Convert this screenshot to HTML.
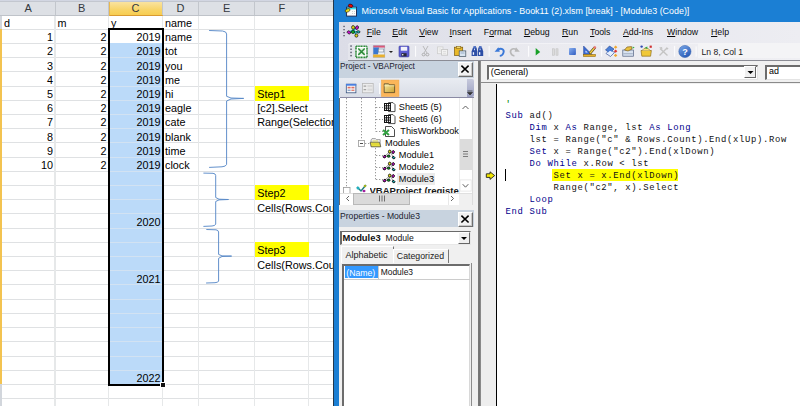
<!DOCTYPE html>
<html><head><meta charset="utf-8"><style>
*{margin:0;padding:0;box-sizing:border-box}
html,body{width:800px;height:406px;overflow:hidden;background:#fff;position:relative;font-family:"Liberation Sans",sans-serif}
.a{position:absolute}
.xl{position:absolute;left:0;top:0;width:333px;height:406px;overflow:hidden;background:#fff}
.c{position:absolute;font-size:10.5px;line-height:14px;color:#000;white-space:nowrap}
.r{text-align:right}
.hl{position:absolute;height:1px;background:#dfe1e3}
.vl{position:absolute;width:1.4px;background:#e6e8e9}
.ch{position:absolute;top:2.4px;height:13px;font-size:11px;line-height:13px;text-align:center;color:#34383e}
.mono{font-family:"Liberation Mono",monospace}
.kw{color:#00008b}
</style></head><body>

<div class="xl">
<div class="a" style="left:0;top:0;width:333px;height:1px;background:#d2d6e2"></div>
<div class="a" style="left:0;top:1px;width:333px;height:1px;background:#c3c7cf"></div>
<div class="a" style="left:0;top:2px;width:333px;height:13px;background:#dde0e5"></div>
<div class="a" style="left:0;top:15px;width:333px;height:1px;background:#bfc3c9"></div>
<div class="a" style="left:108.5px;top:2px;width:54px;height:14px;background:linear-gradient(#fae3a0,#f8d468 60%,#f7cd50);border-left:1px solid #e8b850;border-right:1px solid #e8b850;border-bottom:1px solid #d99a30"></div>
<div class="ch" style="left:1.5px;width:53.5px">A</div>
<div class="a" style="left:54.5px;top:2px;width:1px;height:13px;background:#c2c6cc"></div>
<div class="ch" style="left:55.0px;width:53.5px">B</div>
<div class="a" style="left:108.0px;top:2px;width:1px;height:13px;background:#c2c6cc"></div>
<div class="ch" style="left:108.5px;width:54.0px">C</div>
<div class="a" style="left:162.0px;top:2px;width:1px;height:13px;background:#c2c6cc"></div>
<div class="ch" style="left:162.5px;width:36.19999999999999px">D</div>
<div class="a" style="left:198.2px;top:2px;width:1px;height:13px;background:#c2c6cc"></div>
<div class="ch" style="left:198.7px;width:56.10000000000002px">E</div>
<div class="a" style="left:254.3px;top:2px;width:1px;height:13px;background:#c2c6cc"></div>
<div class="ch" style="left:254.8px;width:53.89999999999998px">F</div>
<div class="a" style="left:308.2px;top:2px;width:1px;height:13px;background:#c2c6cc"></div>
<div class="ch" style="left:308.7px;width:56.80000000000001px">G</div>
<div class="a" style="left:0;top:16px;width:1.8px;height:390px;background:#d2d6dc"></div>
<div class="a" style="left:0;top:29.2px;width:1.8px;height:355.25px;background:#f3c350"></div>
<div class="hl" style="left:2px;top:28.70px;width:331px"></div>
<div class="hl" style="left:2px;top:42.91px;width:331px"></div>
<div class="hl" style="left:2px;top:57.12px;width:331px"></div>
<div class="hl" style="left:2px;top:71.33px;width:331px"></div>
<div class="hl" style="left:2px;top:85.54px;width:331px"></div>
<div class="hl" style="left:2px;top:99.75px;width:331px"></div>
<div class="hl" style="left:2px;top:113.96px;width:331px"></div>
<div class="hl" style="left:2px;top:128.17px;width:331px"></div>
<div class="hl" style="left:2px;top:142.38px;width:331px"></div>
<div class="hl" style="left:2px;top:156.59px;width:331px"></div>
<div class="hl" style="left:2px;top:170.80px;width:331px"></div>
<div class="hl" style="left:2px;top:185.01px;width:331px"></div>
<div class="hl" style="left:2px;top:199.22px;width:331px"></div>
<div class="hl" style="left:2px;top:213.43px;width:331px"></div>
<div class="hl" style="left:2px;top:227.64px;width:331px"></div>
<div class="hl" style="left:2px;top:241.85px;width:331px"></div>
<div class="hl" style="left:2px;top:256.06px;width:331px"></div>
<div class="hl" style="left:2px;top:270.27px;width:331px"></div>
<div class="hl" style="left:2px;top:284.48px;width:331px"></div>
<div class="hl" style="left:2px;top:298.69px;width:331px"></div>
<div class="hl" style="left:2px;top:312.90px;width:331px"></div>
<div class="hl" style="left:2px;top:327.11px;width:331px"></div>
<div class="hl" style="left:2px;top:341.32px;width:331px"></div>
<div class="hl" style="left:2px;top:355.53px;width:331px"></div>
<div class="hl" style="left:2px;top:369.74px;width:331px"></div>
<div class="hl" style="left:2px;top:383.95px;width:331px"></div>
<div class="hl" style="left:2px;top:398.16px;width:331px"></div>
<div class="hl" style="left:2px;top:412.37px;width:331px"></div>
<div class="a" style="left:108.5px;top:43.41px;width:54.0px;height:341.04px;background:#bbdaf9"></div>
<div class="a" style="left:108.5px;top:57.12px;width:54px;height:1px;background:#d2e2f2"></div>
<div class="a" style="left:108.5px;top:71.33px;width:54px;height:1px;background:#d2e2f2"></div>
<div class="a" style="left:108.5px;top:85.54px;width:54px;height:1px;background:#d2e2f2"></div>
<div class="a" style="left:108.5px;top:99.75px;width:54px;height:1px;background:#d2e2f2"></div>
<div class="a" style="left:108.5px;top:113.96px;width:54px;height:1px;background:#d2e2f2"></div>
<div class="a" style="left:108.5px;top:128.17px;width:54px;height:1px;background:#d2e2f2"></div>
<div class="a" style="left:108.5px;top:142.38px;width:54px;height:1px;background:#d2e2f2"></div>
<div class="a" style="left:108.5px;top:156.59px;width:54px;height:1px;background:#d2e2f2"></div>
<div class="a" style="left:108.5px;top:170.80px;width:54px;height:1px;background:#d2e2f2"></div>
<div class="a" style="left:108.5px;top:185.01px;width:54px;height:1px;background:#d2e2f2"></div>
<div class="a" style="left:108.5px;top:199.22px;width:54px;height:1px;background:#d2e2f2"></div>
<div class="a" style="left:108.5px;top:213.43px;width:54px;height:1px;background:#d2e2f2"></div>
<div class="a" style="left:108.5px;top:227.64px;width:54px;height:1px;background:#d2e2f2"></div>
<div class="a" style="left:108.5px;top:241.85px;width:54px;height:1px;background:#d2e2f2"></div>
<div class="a" style="left:108.5px;top:256.06px;width:54px;height:1px;background:#d2e2f2"></div>
<div class="a" style="left:108.5px;top:270.27px;width:54px;height:1px;background:#d2e2f2"></div>
<div class="a" style="left:108.5px;top:284.48px;width:54px;height:1px;background:#d2e2f2"></div>
<div class="a" style="left:108.5px;top:298.69px;width:54px;height:1px;background:#d2e2f2"></div>
<div class="a" style="left:108.5px;top:312.90px;width:54px;height:1px;background:#d2e2f2"></div>
<div class="a" style="left:108.5px;top:327.11px;width:54px;height:1px;background:#d2e2f2"></div>
<div class="a" style="left:108.5px;top:341.32px;width:54px;height:1px;background:#d2e2f2"></div>
<div class="a" style="left:108.5px;top:355.53px;width:54px;height:1px;background:#d2e2f2"></div>
<div class="a" style="left:108.5px;top:369.74px;width:54px;height:1px;background:#d2e2f2"></div>
<div class="vl" style="left:54.3px;top:16px;height:390px"></div>
<div class="vl" style="left:107.8px;top:16px;height:390px"></div>
<div class="vl" style="left:161.8px;top:16px;height:390px"></div>
<div class="vl" style="left:198.0px;top:16px;height:390px"></div>
<div class="vl" style="left:254.10000000000002px;top:16px;height:390px"></div>
<div class="vl" style="left:308.0px;top:16.00px;height:84.25px"></div>
<div class="vl" style="left:308.0px;top:114.46px;height:0.00px"></div>
<div class="vl" style="left:308.0px;top:128.67px;height:71.05px"></div>
<div class="vl" style="left:308.0px;top:213.93px;height:42.63px"></div>
<div class="vl" style="left:308.0px;top:270.77px;height:135.23px"></div>
<div class="a" style="left:254.8px;top:85.84px;width:54.199999999999974px;height:14.91px;background:#ffff00"></div>
<div class="a" style="left:254.8px;top:185.31px;width:54.199999999999974px;height:14.91px;background:#ffff00"></div>
<div class="a" style="left:254.8px;top:242.15px;width:54.199999999999974px;height:14.91px;background:#ffff00"></div>
<div class="c" style="left:4.0px;top:15.96px;font-size:10.8px">d</div>
<div class="c" style="left:57.5px;top:15.96px;font-size:10.8px">m</div>
<div class="c" style="left:111.0px;top:15.96px;font-size:10.8px">y</div>
<div class="c" style="left:165.0px;top:15.96px;font-size:10.8px">name</div>
<div class="c r" style="left:1.5px;width:51.5px;top:30.16px;font-size:10.8px">1</div>
<div class="c r" style="left:55.0px;width:51.5px;top:30.16px;font-size:10.8px">2</div>
<div class="c r" style="left:108.5px;width:52.0px;top:30.16px;font-size:10.8px">2019</div>
<div class="c" style="left:165.0px;top:30.16px;font-size:10.8px">name</div>
<div class="c r" style="left:1.5px;width:51.5px;top:44.37px;font-size:10.8px">2</div>
<div class="c r" style="left:55.0px;width:51.5px;top:44.37px;font-size:10.8px">2</div>
<div class="c r" style="left:108.5px;width:52.0px;top:44.37px;font-size:10.8px">2019</div>
<div class="c" style="left:165.0px;top:44.37px;font-size:10.8px">tot</div>
<div class="c r" style="left:1.5px;width:51.5px;top:58.58px;font-size:10.8px">3</div>
<div class="c r" style="left:55.0px;width:51.5px;top:58.58px;font-size:10.8px">2</div>
<div class="c r" style="left:108.5px;width:52.0px;top:58.58px;font-size:10.8px">2019</div>
<div class="c" style="left:165.0px;top:58.58px;font-size:10.8px">you</div>
<div class="c r" style="left:1.5px;width:51.5px;top:72.79px;font-size:10.8px">4</div>
<div class="c r" style="left:55.0px;width:51.5px;top:72.79px;font-size:10.8px">2</div>
<div class="c r" style="left:108.5px;width:52.0px;top:72.79px;font-size:10.8px">2019</div>
<div class="c" style="left:165.0px;top:72.79px;font-size:10.8px">me</div>
<div class="c r" style="left:1.5px;width:51.5px;top:87.00px;font-size:10.8px">5</div>
<div class="c r" style="left:55.0px;width:51.5px;top:87.00px;font-size:10.8px">2</div>
<div class="c r" style="left:108.5px;width:52.0px;top:87.00px;font-size:10.8px">2019</div>
<div class="c" style="left:165.0px;top:87.00px;font-size:10.8px">hi</div>
<div class="c r" style="left:1.5px;width:51.5px;top:101.21px;font-size:10.8px">6</div>
<div class="c r" style="left:55.0px;width:51.5px;top:101.21px;font-size:10.8px">2</div>
<div class="c r" style="left:108.5px;width:52.0px;top:101.21px;font-size:10.8px">2019</div>
<div class="c" style="left:165.0px;top:101.21px;font-size:10.8px">eagle</div>
<div class="c r" style="left:1.5px;width:51.5px;top:115.42px;font-size:10.8px">7</div>
<div class="c r" style="left:55.0px;width:51.5px;top:115.42px;font-size:10.8px">2</div>
<div class="c r" style="left:108.5px;width:52.0px;top:115.42px;font-size:10.8px">2019</div>
<div class="c" style="left:165.0px;top:115.42px;font-size:10.8px">cate</div>
<div class="c r" style="left:1.5px;width:51.5px;top:129.63px;font-size:10.8px">8</div>
<div class="c r" style="left:55.0px;width:51.5px;top:129.63px;font-size:10.8px">2</div>
<div class="c r" style="left:108.5px;width:52.0px;top:129.63px;font-size:10.8px">2019</div>
<div class="c" style="left:165.0px;top:129.63px;font-size:10.8px">blank</div>
<div class="c r" style="left:1.5px;width:51.5px;top:143.84px;font-size:10.8px">9</div>
<div class="c r" style="left:55.0px;width:51.5px;top:143.84px;font-size:10.8px">2</div>
<div class="c r" style="left:108.5px;width:52.0px;top:143.84px;font-size:10.8px">2019</div>
<div class="c" style="left:165.0px;top:143.84px;font-size:10.8px">time</div>
<div class="c r" style="left:1.5px;width:51.5px;top:158.05px;font-size:10.8px">10</div>
<div class="c r" style="left:55.0px;width:51.5px;top:158.05px;font-size:10.8px">2</div>
<div class="c r" style="left:108.5px;width:52.0px;top:158.05px;font-size:10.8px">2019</div>
<div class="c" style="left:165.0px;top:158.05px;font-size:10.8px">clock</div>
<div class="c r" style="left:108.5px;width:52.0px;top:214.89px;font-size:10.8px">2020</div>
<div class="c r" style="left:108.5px;width:52.0px;top:271.73px;font-size:10.8px">2021</div>
<div class="c r" style="left:108.5px;width:52.0px;top:371.20px;font-size:10.8px">2022</div>
<div class="c" style="left:257.3px;top:87.00px;font-size:10.8px">Step1</div>
<div class="c" style="left:257.3px;top:101.21px;font-size:10.8px">[c2].Select</div>
<div class="c" style="left:257.3px;top:115.42px;font-size:10.8px">Range(Selection.End(xlDown))</div>
<div class="c" style="left:257.3px;top:186.47px;font-size:10.8px">Step2</div>
<div class="c" style="left:257.3px;top:200.68px;font-size:10.8px">Cells(Rows.Count, 3).End(xlUp)</div>
<div class="c" style="left:257.3px;top:243.31px;font-size:10.8px">Step3</div>
<div class="c" style="left:257.3px;top:257.52px;font-size:10.8px">Cells(Rows.Count, 3).End(xlUp)</div>
<div class="a" style="left:108.0px;top:28.40px;width:55.5px;height:357.25px;border:2px solid #000"></div>
<div class="a" style="left:159.8px;top:381.7px;width:6.2px;height:6.2px;background:#fff"></div>
<div class="a" style="left:160.8px;top:382.7px;width:4.3px;height:4.2px;background:#111"></div>
<svg class="a" style="left:0;top:0" width="333" height="406" viewBox="0 0 333 406"><g fill="none" stroke="#5a8ac8" stroke-width="0.95">
<path d="M209.1,30.5 L222.5,31 Q226.6,31.5 226.6,34 L226.6,96.3 L231,98 L243.7,98.4 M243.7,98.4 L231,99 L226.6,101 L226.6,164.4 Q226,166.5 222,166.8 L209.1,167.4"/>
<path d="M203.4,173.1 L213,173.3 Q215.7,173.6 215.7,175.5 L215.7,197.5 L219,199.2 L228.5,199.5 M228.5,199.5 L219,199.9 L215.7,201.5 L215.7,224.1 Q215.3,225.8 212,226 L203.4,226.4"/>
<path d="M206.3,229.5 L216,229.8 Q218.6,230.3 218.6,232 L218.6,254.4 L222,255.9 L231.6,256.1 M231.6,256.1 L222,256.5 L218.6,258.3 L218.6,281 Q218.3,282.5 215,282.7 L206.1,283"/>
</g></svg>
</div>
<div class="a" style="left:333px;top:0;width:1px;height:406px;background:#24384c"></div>
<div class="a" style="left:334px;top:0;width:466px;height:406px;background:#1b7fd4"></div>
<svg class="a" style="left:342px;top:0px" width="18" height="20" viewBox="342 0 18 20">
<rect x="346.6" y="7.2" width="9.9" height="8.9" fill="#fbfbfb" stroke="#14204a" stroke-width="0.9"/>
<rect x="347.1" y="7.6" width="9" height="1.8" fill="#30e0f0"/>
<g fill="#b8b8b8"><rect x="352" y="11" width="0.8" height="0.8"/><rect x="354" y="11" width="0.8" height="0.8"/><rect x="352" y="13" width="0.8" height="0.8"/><rect x="354" y="13" width="0.8" height="0.8"/></g>
<ellipse cx="350.6" cy="5.8" rx="2.3" ry="1.6" fill="#e80808" stroke="#200000" stroke-width="0.6" transform="rotate(15 350.6 5.8)"/>
<ellipse cx="347.6" cy="10.4" rx="2.6" ry="1.6" fill="#e0d818" stroke="#302800" stroke-width="0.6" transform="rotate(-25 347.6 10.4)"/>
</svg>
<div class="a" style="left:361.5px;top:4.86px;font-size:8.92px;line-height:12.49px;color:#fff;white-space:nowrap;">Microsoft Visual Basic for Applications - Book11 (2).xlsm [break] - [Module3 (Code)]</div>
<div class="a" style="left:339px;top:22px;width:461px;height:39px;background:linear-gradient(90deg,#dcdde7,#e4e5ed 40%,#ededf2)"></div>
<div class="a" style="left:366.7px;top:26px;font-size:8.75px;line-height:12px;color:#0a0a0a;white-space:nowrap"><u>F</u>ile</div>
<div class="a" style="left:392.2px;top:26px;font-size:8.75px;line-height:12px;color:#0a0a0a;white-space:nowrap"><u>E</u>dit</div>
<div class="a" style="left:419.2px;top:26px;font-size:8.75px;line-height:12px;color:#0a0a0a;white-space:nowrap"><u>V</u>iew</div>
<div class="a" style="left:449.6px;top:26px;font-size:8.75px;line-height:12px;color:#0a0a0a;white-space:nowrap"><u>I</u>nsert</div>
<div class="a" style="left:483.8px;top:26px;font-size:8.75px;line-height:12px;color:#0a0a0a;white-space:nowrap">F<u>o</u>rmat</div>
<div class="a" style="left:523.9px;top:26px;font-size:8.75px;line-height:12px;color:#0a0a0a;white-space:nowrap"><u>D</u>ebug</div>
<div class="a" style="left:562px;top:26px;font-size:8.75px;line-height:12px;color:#0a0a0a;white-space:nowrap"><u>R</u>un</div>
<div class="a" style="left:590px;top:26px;font-size:8.75px;line-height:12px;color:#0a0a0a;white-space:nowrap"><u>T</u>ools</div>
<div class="a" style="left:623px;top:26px;font-size:8.75px;line-height:12px;color:#0a0a0a;white-space:nowrap"><u>A</u>dd-Ins</div>
<div class="a" style="left:667px;top:26px;font-size:8.75px;line-height:12px;color:#0a0a0a;white-space:nowrap"><u>W</u>indow</div>
<div class="a" style="left:711px;top:26px;font-size:8.75px;line-height:12px;color:#0a0a0a;white-space:nowrap"><u>H</u>elp</div>
<svg class="a" style="left:339px;top:22px" width="30" height="19" viewBox="339 22 30 19">
<g stroke="#111" stroke-width="0.7">
<path d="M349,32.4 L357.5,27.5 M352.9,32 L358.2,31.8 M353,28 L356.4,35.5" stroke="#18a8a8" stroke-width="1.6"/>
<ellipse cx="348.9" cy="32.4" rx="1.8" ry="1.4" fill="#d010d0" transform="rotate(30 348.9 32.4)"/>
<ellipse cx="353.1" cy="27.4" rx="1.5" ry="1.9" fill="#e0d810"/>
<ellipse cx="357" cy="27.6" rx="1.4" ry="1.9" fill="#d010d0" transform="rotate(25 357 27.6)"/>
<ellipse cx="353" cy="32" rx="1.6" ry="1.5" fill="#10c020"/>
<ellipse cx="358.3" cy="31.9" rx="1.7" ry="1.2" fill="#18b8b8"/>
<ellipse cx="356.4" cy="35.6" rx="1.5" ry="1.6" fill="#e0d810"/>
</g>
<g fill="#4a4a5a"><rect x="343.4" y="25.8" width="1.3" height="1.3"/><rect x="343.4" y="29" width="1.3" height="1.3"/><rect x="343.4" y="32" width="1.3" height="1.3"/><rect x="343.4" y="35" width="1.3" height="1.3"/></g>
</svg>
<div class="a" style="left:348.4px;top:42.5px;width:452px;height:17.5px;background:linear-gradient(90deg,#e4e5ec,#ebebf0 50%,#efeff3);border-top-left-radius:3px;border-top:1px solid #f2f2f6"></div>
<div class="a" style="left:348.4px;top:59.8px;width:452px;height:1.9px;background:linear-gradient(#7e7f88,#b4b5bc)"></div>
<svg class="a" style="left:349px;top:44px" width="5" height="14" viewBox="0 0 5 14"><g fill="#5c6070"><rect x="1.3" y="1.3" width="1.5" height="1.5"/><rect x="1.3" y="4.5" width="1.5" height="1.5"/><rect x="1.3" y="7.7" width="1.5" height="1.5"/><rect x="1.3" y="10.9" width="1.5" height="1.5"/></g></svg>

<svg class="a" style="left:339px;top:41px" width="461" height="19" viewBox="339 41 461 19">
<!-- excel -->
<rect x="356" y="46.2" width="11" height="11.2" fill="#fff" stroke="#2e8b3a" stroke-width="1.6" stroke-dasharray="1.2,0.4"/>
<rect x="358" y="48.2" width="7" height="7" fill="#dff0df"/>
<path d="M358.3,48.5 L364.7,54.9 M364.7,48.5 L358.3,54.9" stroke="#2e8b3a" stroke-width="1.5"/>
<!-- userform -->
<rect x="373.2" y="45.8" width="11.6" height="11.4" fill="#e8eef8" stroke="#8090a8" stroke-width="0.5"/>
<rect x="373.4" y="45.6" width="11.4" height="2" fill="#d85878"/>
<path d="M373.4,47.6 L379,47.6 L378,54.5 L373.4,54.5 Z" fill="#3a78d0"/>
<rect x="378.4" y="49" width="5.4" height="3" fill="#f4f6fa" stroke="#708090" stroke-width="0.6"/>
<rect x="373.2" y="54.5" width="11.6" height="2.8" fill="#e8b030"/>
<path d="M388.9,51 L393,51 L391,53 Z" fill="#222"/>
<!-- save -->
<rect x="399" y="46.1" width="10" height="10.8" rx="0.8" fill="#5e5ed2" stroke="#3c3ca0" stroke-width="0.6"/>
<rect x="400.8" y="46.8" width="6.4" height="3.9" fill="#f2f2fa"/>
<rect x="401.4" y="53.2" width="5.2" height="3.2" fill="#282838"/>
<rect x="402" y="54" width="1.4" height="1.4" fill="#e0e0e0"/>
<rect x="415" y="45.9" width="1.1" height="10.8" fill="#fbfbfd"/>
<!-- cut grayed -->
<path d="M423,46 L427,53 M428,46 L424,53" stroke="#b4b4b4" stroke-width="0.9"/>
<ellipse cx="423.6" cy="54.6" rx="1.5" ry="1.3" fill="none" stroke="#a8a8a8" stroke-width="0.9"/><ellipse cx="427.4" cy="54.6" rx="1.5" ry="1.3" fill="none" stroke="#a8a8a8" stroke-width="0.9"/>
<!-- copy grayed -->
<rect x="437.5" y="46.9" width="5.5" height="6.8" fill="#f2f2f2" stroke="#cfcfcf" stroke-width="0.8"/>
<rect x="441.6" y="49.4" width="6" height="5.8" fill="#f2f2f2" stroke="#c4c4c4" stroke-width="0.8"/>
<path d="M438.8,49 L441,49 M438.8,51 L441,51 M443,51.5 L446,51.5 M443,53.3 L446,53.3" stroke="#d0d0d0" stroke-width="0.6"/>
<!-- paste -->
<rect x="454.5" y="47.2" width="8.2" height="8.3" fill="#e8b828" stroke="#7a5a10" stroke-width="0.7"/>
<rect x="456.4" y="46.3" width="4.4" height="2" fill="#f0d870" stroke="#7a5a10" stroke-width="0.5"/>
<rect x="459.2" y="50.9" width="6.6" height="5.6" fill="#d8e4f0" stroke="#405060" stroke-width="0.7"/>
<path d="M460.5,53 L464.5,53" stroke="#8098b8" stroke-width="0.7"/>
<!-- find -->
<path d="M471.6,55.9 L471.6,51.5 L473,47.4 L476.6,47.4 L477.2,51.5 L477.2,55.9 Z" fill="#2c4ea6"/>
<path d="M477.8,55.9 L477.8,51.5 L478.4,47.4 L482,47.4 L483.2,51.5 L483.2,55.9 Z" fill="#2c4ea6"/>
<rect x="473.4" y="46.1" width="2.6" height="2" fill="#4a6cc0"/><rect x="479" y="46.1" width="2.6" height="2" fill="#4a6cc0"/>
<rect x="472.8" y="52.2" width="1.3" height="2.6" fill="#f0f4ff"/><rect x="479" y="52.2" width="1.3" height="2.6" fill="#f0f4ff"/>
<rect x="474" y="48.6" width="1" height="1.6" fill="#d0dcf8"/><rect x="479.6" y="48.6" width="1" height="1.6" fill="#d0dcf8"/>
<rect x="488.6" y="45.9" width="1.1" height="10.8" fill="#fbfbfd"/>
<!-- undo -->
<path d="M497.8,49.6 C501.8,47.4 504.6,50 503.4,53 C502.6,55 501,55.8 499.8,55.9" fill="none" stroke="#3a78d8" stroke-width="1.9"/>
<path d="M494.6,51.8 L498.4,47.2 L499.8,51.8 Z" fill="#3a78d8"/>
<!-- redo gray -->
<path d="M516.4,49.6 C512.4,47.4 509.6,50 510.8,53 C511.6,55 513.2,55.8 514.4,55.9" fill="none" stroke="#b8b8b8" stroke-width="1.7"/>
<path d="M519.8,51.8 L516,47.2 L514.6,51.8 Z" fill="#b8b8b8"/>
<rect x="528" y="45.9" width="1.1" height="10.8" fill="#fbfbfd"/>
<!-- run -->
<path d="M535.7,48.1 L540.2,51.9 L535.7,55.6 Z" fill="#18a028"/>
<!-- pause gray -->
<rect x="552.6" y="48.8" width="2" height="6.4" fill="#dcdcdc" stroke="#c0c0c0" stroke-width="0.6"/>
<rect x="556" y="48.8" width="2" height="6.4" fill="#dcdcdc" stroke="#c0c0c0" stroke-width="0.6"/>
<!-- stop -->
<defs><linearGradient id="sg" x1="0" y1="0" x2="1" y2="1"><stop offset="0" stop-color="#8ab0f0"/><stop offset="1" stop-color="#2f5cc0"/></linearGradient></defs>
<rect x="569" y="48.1" width="6.9" height="7" rx="0.8" fill="url(#sg)"/>
<!-- design mode -->
<path d="M583.6,55 L583.6,46 L592.4,55 Z" fill="#3a6ad0" stroke="#1a3a90" stroke-width="0.5"/>
<path d="M585.5,52.6 L585.5,50.4 L587.8,52.6 Z" fill="#e8f0ff"/>
<path d="M589.6,53.6 L595,47.4" stroke="#403010" stroke-width="2.6"/>
<path d="M589.9,53.3 L594.7,47.7" stroke="#f2d040" stroke-width="1.6"/>
<path d="M594,48.4 L595.6,46.6" stroke="#e87878" stroke-width="2.2"/>
<rect x="583.4" y="54.4" width="12.2" height="2.2" fill="#e8b028" stroke="#806010" stroke-width="0.5"/>
<rect x="601" y="45.9" width="1.1" height="10.8" fill="#fbfbfd"/>
<!-- project explorer -->
<path d="M605.5,50 L609.5,46 L614,49 L610,53 Z" fill="#4a80d8" stroke="#24408a" stroke-width="0.6"/>
<path d="M606,53.5 L610,49.5 L614.5,52.5 L610.5,56.5 Z" fill="#e8f0ff" stroke="#24408a" stroke-width="0.6"/>
<path d="M607.6,52.2 L610,49.8 L612.4,51.5" stroke="#4a80d8" stroke-width="1.2" fill="none"/>
<path d="M615.6,45.6 L617.4,47.2 L615.6,48.8 L613.8,47.2 Z" fill="#f0a830"/>
<path d="M615.6,49.6 L617.4,51.2 L615.6,52.8 L613.8,51.2 Z" fill="#e03838"/>
<path d="M615.6,53.8 L617.4,55.4 L615.6,57 L613.8,55.4 Z" fill="#f0a830"/>
<!-- properties -->
<rect x="622.8" y="50" width="10.6" height="6.2" fill="#d8e2f0" stroke="#506080" stroke-width="0.7"/>
<rect x="623.4" y="53.4" width="9.4" height="0.8" fill="#90a0b8"/>
<path d="M624.5,50 L627,47 L631.5,46.6 L632,49 L628,51 Z" fill="#e8c040" stroke="#705010" stroke-width="0.6"/>
<path d="M632.6,46.6 L634.6,47.6 L632.6,48.8 Z" fill="#30a840"/>
<!-- object browser -->
<path d="M641,50.5 L651.4,50.5 L650.6,56.2 L641.8,56.2 Z" fill="#f0c838" stroke="#806010" stroke-width="0.6"/>
<path d="M642,50.5 L644,48.5 L648,48.5 L650.4,50.5" fill="#f8e080" stroke="#806010" stroke-width="0.5"/>
<circle cx="641.6" cy="46.6" r="1.2" fill="#3048b0"/>
<path d="M644.6,47.8 L647.4,46.6 L647.4,49 Z" fill="#30a840"/>
<rect x="649.6" y="45.6" width="2.2" height="2.2" fill="#d03030"/>
<!-- toolbox gray -->
<path d="M659.5,55.5 L667,48 M660,48.5 L667.5,55.5" stroke="#c4c4c4" stroke-width="1.4"/>
<path d="M659,47.5 L662,47 L662.5,49.6 Z M666.5,47 L668.6,48.6 L666.8,50 Z" fill="#c4c4c4"/>
<rect x="674" y="45.9" width="1.1" height="10.8" fill="#fbfbfd"/>
<!-- help -->
<defs><linearGradient id="hg" x1="0" y1="0" x2="0.6" y2="1"><stop offset="0" stop-color="#7aa8e8"/><stop offset="1" stop-color="#2a5cb8"/></linearGradient></defs>
<circle cx="684.9" cy="51.5" r="6.1" fill="url(#hg)" stroke="#2a58a8" stroke-width="0.5"/>
<text x="685" y="55" font-size="9" font-weight="bold" text-anchor="middle" fill="#fff" font-family="Liberation Sans">?</text>
<rect x="695.6" y="46.4" width="1" height="10.3" fill="#fdfdfd"/>
</svg>
<div class="a" style="left:698px;top:43.4px;width:102px;height:14.8px;background:#f4f4f6"></div>
<div class="a" style="left:701.5px;top:46.20px;font-size:8.6px;line-height:12.04px;color:#1a1a1a;white-space:nowrap;">Ln 8, Col 1</div>
<div class="a" style="left:339px;top:61px;width:461px;height:345px;background:#f0f0f0"></div>
<div class="a" style="left:339px;top:61px;width:135px;height:17px;background:#c8d3df"></div>
<div class="a" style="left:340px;top:60.99px;font-size:8.23px;line-height:11.52px;color:#1c2230;white-space:nowrap;">Project - VBAProject</div>
<div class="a" style="left:458px;top:61.8px;width:14.6px;height:14.9px;background:#f2f2f2;border:1px solid #fff;border-right:1.3px solid #6e6e6e;border-bottom:1.3px solid #6e6e6e;box-shadow:inset -1px -1px 0 #c8c8c8"></div>
<svg class="a" style="left:458px;top:62px" width="15" height="15" viewBox="0 0 15 15"><path d="M3.4,3.6 L10.6,10.5 M10.6,3.6 L3.4,10.5" stroke="#000" stroke-width="1.6"/></svg>
<div class="a" style="left:339px;top:78px;width:135px;height:19px;background:linear-gradient(#e9ecf2,#d9dde6)"></div>
<div class="a" style="left:467px;top:79px;width:7px;height:18px;background:linear-gradient(#c6c9dc,#9a9fc0);border-radius:0 2px 2px 0"></div>
<svg class="a" style="left:466px;top:90px" width="8" height="6" viewBox="0 0 8 6"><path d="M1.5,1 L6.5,1 M1.5,2.5 L6.5,2.5 L4,5 Z" stroke="#333" stroke-width="0.7" fill="#333"/></svg>
<div class="a" style="left:339.5px;top:97px;width:134.5px;height:1.3px;background:#8a8aa4"></div>
<svg class="a" style="left:339px;top:78px" width="70" height="19" viewBox="339 78 70 19">
<defs><linearGradient id="fg" x1="0" y1="0" x2="1" y2="1"><stop offset="0" stop-color="#f8e8a0"/><stop offset="1" stop-color="#c8a030"/></linearGradient></defs>
<rect x="346.3" y="84.2" width="9.6" height="8.6" fill="#f4f6fa" stroke="#3a5680" stroke-width="0.8"/>
<rect x="346" y="83.9" width="10.2" height="1.8" fill="#4a80e0"/>
<rect x="347.6" y="86.8" width="3" height="1.6" fill="#e07060"/><rect x="351.4" y="86.8" width="3" height="1.6" fill="#e07060"/>
<rect x="347.6" y="89.6" width="3" height="1.4" fill="#90a8c8"/><rect x="351.4" y="89.6" width="3" height="1.4" fill="#e08070"/>
<rect x="362.4" y="83.4" width="10.8" height="9.4" fill="#ececec" stroke="#b8b8b8" stroke-width="0.8"/>
<rect x="363.6" y="85.6" width="2.6" height="1" fill="#909090"/><rect x="363.6" y="89.2" width="2.6" height="1" fill="#909090"/>
<rect x="367.4" y="85" width="5" height="2.2" fill="#d8d8d8"/><rect x="367.4" y="88.6" width="5" height="2.2" fill="#d8d8d8"/>
<rect x="379" y="83" width="1" height="11" fill="#fafafa"/>
<rect x="381.6" y="80.1" width="17.3" height="16.2" fill="#fbb65a" stroke="#f5a640" stroke-width="0.6"/>
<path d="M384.2,85.2 L384.2,83.8 L388.6,83.8 L389.4,84.8 L394.6,84.8 L394.6,92.6 L384.2,92.6 Z" fill="url(#fg)" stroke="#403820" stroke-width="0.7"/>
<path d="M384.2,85.8 L394.6,85.8" stroke="#fff8d0" stroke-width="0.6"/>
</svg>
<div class="a" style="left:339px;top:98px;width:1.2px;height:106.5px;background:#6a6a6a"></div>
<div class="a" style="left:340px;top:98px;width:119px;height:95px;background:#fff"></div>
<svg class="a" style="left:340px;top:98px" width="119" height="95" viewBox="340 98 119 95">
<g stroke="#9a9a9a" stroke-width="1" stroke-dasharray="1.3,1.7" fill="none">
<line x1="346.5" y1="98" x2="346.5" y2="188"/>
<line x1="361.5" y1="98" x2="361.5" y2="139"/>
<line x1="375.5" y1="98" x2="375.5" y2="131.5"/>
<line x1="376" y1="107.5" x2="383" y2="107.5"/>
<line x1="376" y1="119.5" x2="383" y2="119.5"/>
<line x1="376" y1="131.5" x2="383" y2="131.5"/>
<line x1="365" y1="143.5" x2="370" y2="143.5"/>
<line x1="375.5" y1="148" x2="375.5" y2="179.5"/>
<line x1="376" y1="155.5" x2="383" y2="155.5"/>
<line x1="376" y1="167.5" x2="383" y2="167.5"/>
<line x1="376" y1="179.5" x2="383" y2="179.5"/>
</g>
<path d="M388.5,102.6 L393,102.6 L395,104.6 L395,111.6 L388.5,111.6 Z" fill="#fff" stroke="#222" stroke-width="0.8"/>
<rect x="384" y="103" width="7" height="8" fill="#111"/><rect x="385" y="104.0" width="1.1" height="1.3" fill="#fff"/><rect x="385" y="106.3" width="1.1" height="1.3" fill="#fff"/><rect x="385" y="108.6" width="1.1" height="1.3" fill="#fff"/><rect x="387" y="104.0" width="1.1" height="1.3" fill="#fff"/><rect x="387" y="106.3" width="1.1" height="1.3" fill="#fff"/><rect x="387" y="108.6" width="1.1" height="1.3" fill="#fff"/><rect x="389" y="104.0" width="1.1" height="1.3" fill="#fff"/><rect x="389" y="106.3" width="1.1" height="1.3" fill="#fff"/><rect x="389" y="108.6" width="1.1" height="1.3" fill="#fff"/><path d="M388.5,114.6 L393,114.6 L395,116.6 L395,123.6 L388.5,123.6 Z" fill="#fff" stroke="#222" stroke-width="0.8"/>
<rect x="384" y="115" width="7" height="8" fill="#111"/><rect x="385" y="116.0" width="1.1" height="1.3" fill="#fff"/><rect x="385" y="118.3" width="1.1" height="1.3" fill="#fff"/><rect x="385" y="120.6" width="1.1" height="1.3" fill="#fff"/><rect x="387" y="116.0" width="1.1" height="1.3" fill="#fff"/><rect x="387" y="118.3" width="1.1" height="1.3" fill="#fff"/><rect x="387" y="120.6" width="1.1" height="1.3" fill="#fff"/><rect x="389" y="116.0" width="1.1" height="1.3" fill="#fff"/><rect x="389" y="118.3" width="1.1" height="1.3" fill="#fff"/><rect x="389" y="120.6" width="1.1" height="1.3" fill="#fff"/><path d="M385.5,126.5 L391.5,126.5 L394.5,129.5 L394.5,136.5 L385.5,136.5 Z" fill="#fff" stroke="#222" stroke-width="0.8"/>
<path d="M383,130 L389,135 M389,130 L383,135" stroke="#30a040" stroke-width="2"/>
<rect x="358.5" y="140.5" width="6" height="6" fill="#fff" stroke="#999" stroke-width="0.8"/>
<line x1="360" y1="143.5" x2="363" y2="143.5" stroke="#222" stroke-width="0.8"/>
<path d="M371,140 L372,138.6 L375.5,138.6 L376.5,139.6 L380.2,139.6 L380.2,146.6 L371,146.6 Z" fill="#f0f0f0" stroke="#707070" stroke-width="0.6"/>
<path d="M370.2,142.2 L379.4,142.2 L380.8,146.8 L371.2,146.8 Z" fill="#e8e040" stroke="#303030" stroke-width="0.6"/>
<path d="M372.5,141 L378,141 M372,144 L379,144" stroke="#d8d030" stroke-width="0.8"/>
<g stroke="#000" stroke-width="0.8">
<path d="M384.5,156.5 L390,151.5 L393.5,157.5 M390,151.5 L388.5,156.3" stroke="#909090" stroke-width="0.9" fill="none"/>
<ellipse cx="389.7" cy="151.6" rx="1.3" ry="1.5" fill="#e8e020"/>
<ellipse cx="393.2" cy="152.1" rx="1.2" ry="1.5" fill="#c010c0" transform="rotate(20 393.2 152.1)"/>
<ellipse cx="384.6" cy="156.6" rx="1.5" ry="1.2" fill="#c010c0" transform="rotate(-30 384.6 156.6)"/>
<ellipse cx="388.6" cy="156.2" rx="1.5" ry="1.1" fill="#10a030"/>
<ellipse cx="393.6" cy="157.6" rx="1.4" ry="1.1" fill="#10b8c0" transform="rotate(30 393.6 157.6)"/>
</g><g stroke="#000" stroke-width="0.8">
<path d="M384.5,168.5 L390,163.5 L393.5,169.5 M390,163.5 L388.5,168.3" stroke="#909090" stroke-width="0.9" fill="none"/>
<ellipse cx="389.7" cy="163.6" rx="1.3" ry="1.5" fill="#e8e020"/>
<ellipse cx="393.2" cy="164.1" rx="1.2" ry="1.5" fill="#c010c0" transform="rotate(20 393.2 164.1)"/>
<ellipse cx="384.6" cy="168.6" rx="1.5" ry="1.2" fill="#c010c0" transform="rotate(-30 384.6 168.6)"/>
<ellipse cx="388.6" cy="168.2" rx="1.5" ry="1.1" fill="#10a030"/>
<ellipse cx="393.6" cy="169.6" rx="1.4" ry="1.1" fill="#10b8c0" transform="rotate(30 393.6 169.6)"/>
</g><g stroke="#000" stroke-width="0.8">
<path d="M384.5,180.5 L390,175.5 L393.5,181.5 M390,175.5 L388.5,180.3" stroke="#909090" stroke-width="0.9" fill="none"/>
<ellipse cx="389.7" cy="175.6" rx="1.3" ry="1.5" fill="#e8e020"/>
<ellipse cx="393.2" cy="176.1" rx="1.2" ry="1.5" fill="#c010c0" transform="rotate(20 393.2 176.1)"/>
<ellipse cx="384.6" cy="180.6" rx="1.5" ry="1.2" fill="#c010c0" transform="rotate(-30 384.6 180.6)"/>
<ellipse cx="388.6" cy="180.2" rx="1.5" ry="1.1" fill="#10a030"/>
<ellipse cx="393.6" cy="181.6" rx="1.4" ry="1.1" fill="#10b8c0" transform="rotate(30 393.6 181.6)"/>
</g><rect x="343.5" y="187.5" width="6.5" height="6.5" fill="#fff" stroke="#999" stroke-width="0.8"/>
<path d="M357,187 L361,191 L366,185" stroke="#208080" stroke-width="1.5" fill="none"/>
<ellipse cx="358" cy="188" rx="1.5" ry="1.5" fill="#20b0c0"/><ellipse cx="365" cy="186" rx="1.3" ry="1.3" fill="#a0b020"/><ellipse cx="364" cy="191" rx="1.5" ry="1.3" fill="#a020a0"/>
</svg>
<div class="a" style="left:397px;top:173px;width:37.8px;height:11.5px;background:#ebebeb"></div>
<div class="a" style="left:398.8px;top:102px;font-size:9.2px;line-height:11px;color:#080808;white-space:nowrap">Sheet5 (5)</div>
<div class="a" style="left:398.8px;top:114px;font-size:9.2px;line-height:11px;color:#080808;white-space:nowrap">Sheet6 (6)</div>
<div class="a" style="left:400.3px;top:126px;font-size:9.2px;line-height:11px;color:#080808;white-space:nowrap">ThisWorkbook</div>
<div class="a" style="left:385px;top:138px;font-size:9.2px;line-height:11px;color:#080808;white-space:nowrap">Modules</div>
<div class="a" style="left:398.8px;top:150px;font-size:9.2px;line-height:11px;color:#080808;white-space:nowrap">Module1</div>
<div class="a" style="left:398.8px;top:162px;font-size:9.2px;line-height:11px;color:#080808;white-space:nowrap">Module2</div>
<div class="a" style="left:398.8px;top:174px;font-size:9.2px;line-height:11px;color:#080808;white-space:nowrap">Module3</div>
<div class="a" style="left:369.5px;top:184px;width:89px;height:8.5px;overflow:hidden"><div style="position:absolute;left:0;top:0.5px;font-size:9.5px;font-weight:bold;line-height:11px;color:#1a1a1a;white-space:nowrap">VBAProject (registe</div></div>
<div class="a" style="left:459px;top:98px;width:13px;height:95px;background:#fff;border-left:1px solid #ececec"></div>
<div class="a" style="left:460px;top:139.3px;width:12px;height:31px;background:#dcdcdc"></div>
<svg class="a" style="left:459px;top:98px" width="13" height="95" viewBox="0 0 13 95"><rect x="1" y="81.9" width="11.2" height="11.2" fill="#fff" stroke="#e4e4e4" stroke-width="0.8"/><path d="M3.5,11 L6.5,8 L9.5,11" stroke="#606060" fill="none" stroke-width="1"/><path d="M3.7,86.2 L6.5,89.2 L9.3,86.2" stroke="#606060" fill="none" stroke-width="1"/><path d="M4,53.5 L9,53.5 M4,56 L9,56 M4,58.5 L9,58.5" stroke="#707070" stroke-width="0.9"/></svg>
<div class="a" style="left:460px;top:193px;width:12px;height:11.6px;background:#efefef"></div>
<div class="a" style="left:472px;top:98px;width:1px;height:107px;background:#dcdcdc"></div>
<div class="a" style="left:340px;top:192.5px;width:132px;height:12px;background:#f0f0f0;border-top:1px solid #e0e0e0"></div>
<div class="a" style="left:340px;top:193.5px;width:13px;height:11px;background:#fff"></div>
<div class="a" style="left:353px;top:192.5px;width:57px;height:12px;background:#dadada;border:1px solid #b8b8b8"></div>
<div class="a" style="left:409.5px;top:193.5px;width:38px;height:11px;background:#fff"></div>
<div class="a" style="left:447.5px;top:193.5px;width:11.5px;height:11px;background:#fff;border-left:1px solid #e8e8e8"></div>
<svg class="a" style="left:340px;top:193px" width="120" height="12" viewBox="340 193 120 12"><path d="M349,196 L346.5,198.5 L349,201" stroke="#555" fill="none" stroke-width="0.9"/><path d="M451,196 L453.5,198.5 L451,201" stroke="#555" fill="none" stroke-width="0.9"/><path d="M379.5,195.5 L379.5,201.5 M382,195.5 L382,201.5 M384.5,195.5 L384.5,201.5" stroke="#606060" stroke-width="0.9"/></svg>
<div class="a" style="left:339px;top:210px;width:135px;height:17px;background:#c8d3df"></div>
<div class="a" style="left:340px;top:209.98px;font-size:8.62px;line-height:12.07px;color:#1c2230;white-space:nowrap;">Properties - Module3</div>
<div class="a" style="left:458px;top:211.8px;width:14.6px;height:14.9px;background:#f2f2f2;border:1px solid #fff;border-right:1.3px solid #6e6e6e;border-bottom:1.3px solid #6e6e6e;box-shadow:inset -1px -1px 0 #c8c8c8"></div>
<svg class="a" style="left:458px;top:212px" width="15" height="15" viewBox="0 0 15 15"><path d="M3.4,3.6 L10.6,10.5 M10.6,3.6 L3.4,10.5" stroke="#000" stroke-width="1.6"/></svg>
<div class="a" style="left:339.6px;top:230.8px;width:131px;height:14px;background:#fff;border-left:2px solid #6a6a6a;border-top:1.6px solid #6a6a6a;border-right:1px solid #e8e8e8;border-bottom:1px solid #e8e8e8"></div>
<div class="a" style="left:342.6px;top:231.16px;font-size:9.4px;line-height:13.16px;color:#111;white-space:nowrap;font-weight:bold;">Module3</div>
<div class="a" style="left:385.5px;top:232.10px;font-size:8.6px;line-height:12.04px;color:#111;white-space:nowrap;">Module</div>
<div class="a" style="left:458px;top:232px;width:12px;height:11.5px;background:#f0f0f0;border:1px solid #fff;border-right-color:#666;border-bottom-color:#666"></div>
<svg class="a" style="left:458px;top:232px" width="12" height="12" viewBox="0 0 12 12"><path d="M3,5 L9,5 L6,8 Z" fill="#000"/></svg>
<div class="a" style="left:340.5px;top:246px;width:53px;height:17px;background:#f0f0f0;border:1px solid #fff;border-right-color:#777;border-bottom:none"></div>
<div class="a" style="left:345.4px;top:248.52px;font-size:9.06px;line-height:12.68px;color:#222;white-space:nowrap;">Alphabetic</div>
<div class="a" style="left:393.3px;top:249.2px;width:55.5px;height:13.8px;background:#f0f0f0;border:1px solid #fff;border-right:1.5px solid #777;border-bottom:none"></div>
<div class="a" style="left:396.8px;top:249.92px;font-size:8.77px;line-height:12.28px;color:#222;white-space:nowrap;">Categorized</div>
<div class="a" style="left:342px;top:263.5px;width:128px;height:143px;background:#fff;border:2px solid #6c6c6c;border-right:1px solid #d8d8d8;border-bottom:none"></div>
<div class="a" style="left:344.5px;top:266px;width:33px;height:12px;background:#3399ff"></div>
<div class="a" style="left:346.3px;top:266.50px;font-size:8.7px;line-height:12.18px;color:#fff;white-space:nowrap;">(Name)</div>
<div class="a" style="left:377.5px;top:266px;width:1px;height:12.5px;background:#ccc"></div>
<div class="a" style="left:343.5px;top:278.5px;width:126px;height:1px;background:#ccc"></div>
<div class="a" style="left:380.7px;top:266.56px;font-size:8.45px;line-height:11.83px;color:#111;white-space:nowrap;">Module3</div>
<div class="a" style="left:470.5px;top:263px;width:1.6px;height:143px;background:#8c8c8c"></div>
<div class="a" style="left:478px;top:61px;width:2.8px;height:345px;background:linear-gradient(90deg,#7a7a7a,#737373 60%,#9a9a9a)"></div>
<div class="a" style="left:480.8px;top:61px;width:320px;height:22px;background:#f0f0f0"></div>
<div class="a" style="left:487px;top:64.5px;width:270.5px;height:15px;background:#fff;border-left:2px solid #6c6c6c;border-top:2px solid #6c6c6c;border-right:1px solid #e4e4e4;border-bottom:1.5px solid #e4e4e4"></div>
<div class="a" style="left:490.75px;top:65.71px;font-size:8.88px;line-height:12.43px;color:#000;white-space:nowrap;">(General)</div>
<div class="a" style="left:743.5px;top:66px;width:12.5px;height:12px;background:#f0f0f0;border:1px solid #fff;border-right-color:#666;border-bottom-color:#666"></div>
<svg class="a" style="left:743.5px;top:66px" width="13" height="12" viewBox="0 0 13 12"><path d="M3.5,5 L9.5,5 L6.5,8 Z" fill="#000"/></svg>
<div class="a" style="left:765.2px;top:64.6px;width:40px;height:15px;background:#fff;border-left:2px solid #6c6c6c;border-top:2px solid #6c6c6c;border-right:none;border-bottom:1.5px solid #e4e4e4"></div>
<div class="a" style="left:769px;top:65.29px;font-size:8.9px;line-height:12.46px;color:#000;white-space:nowrap;">ad</div>
<div class="a" style="left:480.8px;top:81.9px;width:320px;height:1.6px;background:linear-gradient(#9a9a9a,#7a7a7a)"></div>
<div class="a" style="left:480.8px;top:84px;width:15.2px;height:322px;background:#eeeeee"></div>
<div class="a" style="left:496px;top:84px;width:1.2px;height:322px;background:#000"></div>
<div class="a" style="left:497.2px;top:84px;width:303px;height:322px;background:#fff"></div>
<div class="a" style="left:552.4px;top:169.4px;width:126px;height:11.2px;background:#ffff00"></div>
<div class="a mono" style="left:505.6px;top:99.33px;font-size:8.9px;letter-spacing:0.660px;line-height:12px;color:#111;white-space:pre"><span style='color:#008000'>'</span></div>
<div class="a mono" style="left:505.6px;top:109.91px;font-size:8.9px;letter-spacing:0.660px;line-height:12px;color:#111;white-space:pre"><span class=kw>Sub</span> ad()</div>
<div class="a mono" style="left:505.6px;top:121.89px;font-size:8.9px;letter-spacing:0.660px;line-height:12px;color:#111;white-space:pre">    <span class=kw>Dim</span> x <span class=kw>As</span> Range, lst <span class=kw>As</span> <span class=kw>Long</span></div>
<div class="a mono" style="left:505.6px;top:133.87px;font-size:8.9px;letter-spacing:0.660px;line-height:12px;color:#111;white-space:pre">    lst = Range("c" &amp; Rows.Count).End(xlUp).Row</div>
<div class="a mono" style="left:505.6px;top:145.85px;font-size:8.9px;letter-spacing:0.660px;line-height:12px;color:#111;white-space:pre">    <span class=kw>Set</span> x = Range("c2").End(xlDown)</div>
<div class="a mono" style="left:505.6px;top:157.83px;font-size:8.9px;letter-spacing:0.660px;line-height:12px;color:#111;white-space:pre">    <span class=kw>Do</span> <span class=kw>While</span> x.Row &lt; lst</div>
<div class="a mono" style="left:505.6px;top:169.81px;font-size:8.9px;letter-spacing:0.660px;line-height:12px;color:#111;white-space:pre">        Set x = x.End(xlDown)</div>
<div class="a mono" style="left:505.6px;top:181.79px;font-size:8.9px;letter-spacing:0.660px;line-height:12px;color:#111;white-space:pre">        Range("c2", x).Select</div>
<div class="a mono" style="left:505.6px;top:193.77px;font-size:8.9px;letter-spacing:0.660px;line-height:12px;color:#111;white-space:pre">    <span class=kw>Loop</span></div>
<div class="a mono" style="left:505.6px;top:205.75px;font-size:8.9px;letter-spacing:0.660px;line-height:12px;color:#111;white-space:pre"><span class=kw>End</span> <span class=kw>Sub</span></div>
<div class="a" style="left:505px;top:169px;width:1.1px;height:11.6px;background:#000"></div>
<svg class="a" style="left:480px;top:168px" width="16" height="16" viewBox="480 168 16 16"><path d="M486.3,173.8 L490,173.8 L490,171.8 L494.7,175.6 L490,179.4 L490,177.4 L486.3,177.4 Z" fill="#f2e600" stroke="#222" stroke-width="0.9" stroke-linejoin="round"/></svg>
</body></html>
